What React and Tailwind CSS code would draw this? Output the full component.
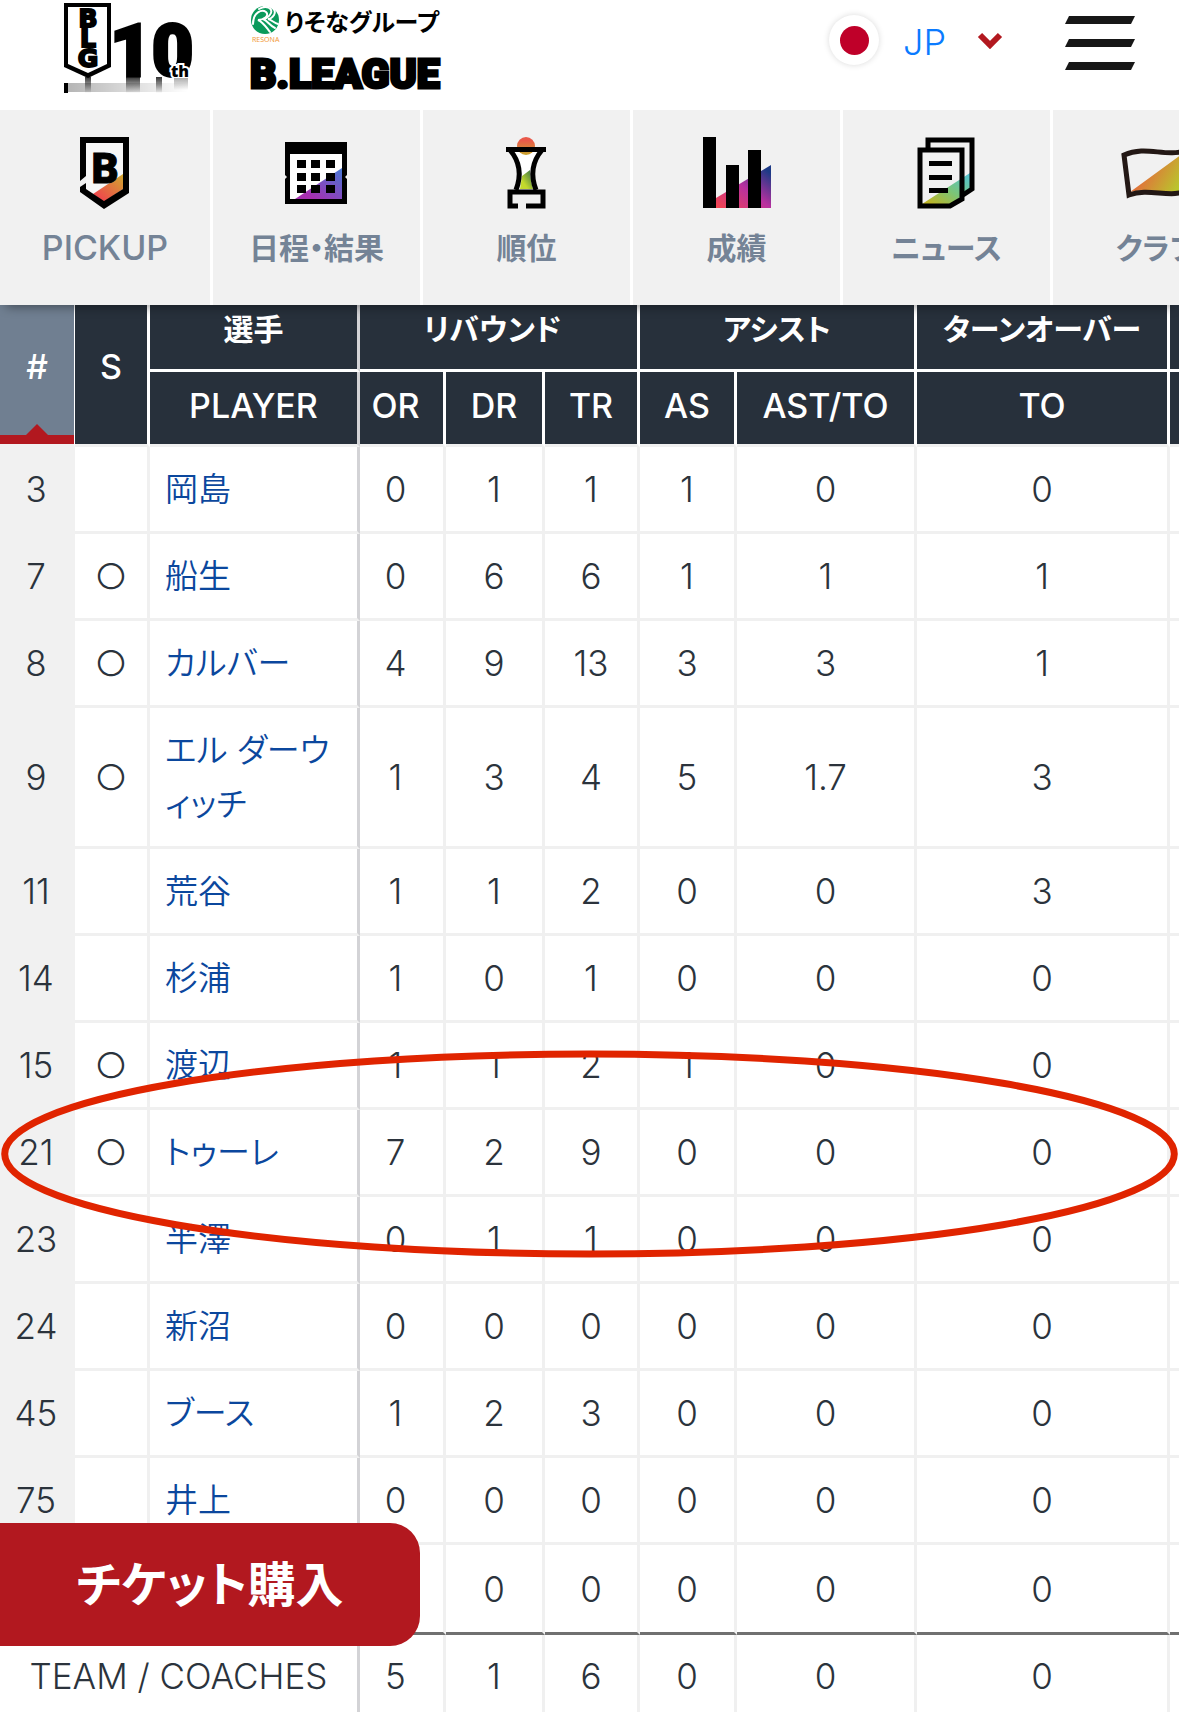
// src/App.jsx
import { useState } from "react";

const players = [
  { no: 3, starter: false, name: "岡島", stats: [0, 1, 1, 1, 0, 0] },
  { no: 7, starter: true, name: "船生", stats: [0, 6, 6, 1, 1, 1] },
  { no: 8, starter: true, name: "カルバー", stats: [4, 9, 13, 3, 3, 1] },
  { no: 9, starter: true, name: "エル ダーウィッチ", stats: [1, 3, 4, 5, 1.7, 3] },
  { no: 11, starter: false, name: "荒谷", stats: [1, 1, 2, 0, 0, 3] },
  { no: 14, starter: false, name: "杉浦", stats: [1, 0, 1, 0, 0, 0] },
  { no: 15, starter: true, name: "渡辺", stats: [1, 1, 2, 1, 0, 0] },
  { no: 21, starter: true, name: "トゥーレ", stats: [7, 2, 9, 0, 0, 0], marked: true },
  { no: 23, starter: false, name: "半澤", stats: [0, 1, 1, 0, 0, 0] },
  { no: 24, starter: false, name: "新沼", stats: [0, 0, 0, 0, 0, 0] },
  { no: 45, starter: false, name: "ブース", stats: [1, 2, 3, 0, 0, 0] },
  { no: 75, starter: false, name: "井上", stats: [0, 0, 0, 0, 0, 0] },
  { no: "", starter: false, name: "", stats: ["", 0, 0, 0, 0, 0] },
];

const teamStats = [5, 1, 6, 0, 0, 0];

const AnniversaryLogo = () => (
  <svg width="132" height="96" viewBox="0 0 132 96" aria-label="B.LEAGUE 10th">
    <defs>
      <linearGradient id="smear" x1="0" y1="0" x2="0" y2="1">
        <stop offset="0" stopColor="#000" stopOpacity="0.8" />
        <stop offset="1" stopColor="#000" stopOpacity="0" />
      </linearGradient>
      <linearGradient id="smearSide" x1="0" y1="0" x2="1" y2="0">
        <stop offset="0" stopColor="#000" stopOpacity="0.6" />
        <stop offset="1" stopColor="#000" stopOpacity="0" />
      </linearGradient>
    </defs>
    <path d="M0 3H47V67L24 78L0 67Z" />
    <path d="M4 7H43V64L24 73L4 64Z" fill="#fff" />
    <g
      fontFamily="'DejaVu Sans', sans-serif"
      fontWeight="700"
      fontSize="25"
      textAnchor="middle"
      stroke="#000"
      strokeWidth="2"
    >
      <text x="24" y="27">B</text>
      <text x="24" y="47">L</text>
      <text x="24" y="67">G</text>
    </g>
    <text
      x="46"
      y="76"
      fontFamily="Roboto, sans-serif"
      fontWeight="900"
      fontSize="72"
      stroke="#000"
      strokeWidth="3"
    >
      10
    </text>
    <text
      x="107"
      y="77"
      fontFamily="'Open Sans', sans-serif"
      fontWeight="800"
      fontSize="16"
      stroke="#fff"
      strokeWidth="4"
      paintOrder="stroke"
    >
      th
    </text>
    <rect x="21" y="77" width="6" height="16" fill="url(#smear)" />
    <rect x="62" y="77" width="14" height="16" fill="url(#smear)" />
    <rect x="92" y="77" width="6" height="16" fill="url(#smear)" />
    <rect x="110" y="78" width="14" height="12" fill="url(#smear)" opacity="0.4" />
    <rect x="0" y="83" width="124" height="9" fill="url(#smearSide)" opacity="0.5" />
    <rect x="0" y="83" width="4" height="10" />
  </svg>
);

const LeagueLogo = () => (
  <svg width="200" height="94" viewBox="0 0 200 94" aria-label="りそなグループ B.LEAGUE">
    <circle cx="15" cy="20" r="14" fill="#0a9a5b" />
    <g fill="none" stroke="#fff" strokeWidth="2" strokeLinecap="round">
      <path d="M3 24C3 12 12 9 16 12C20 16 13 20 8 20C13 22 16 27 20 32" />
      <path d="M9 9C16 5 23 8 21 13C19 18 14 19 13 19C18 21 20 26 25 28" />
      <path d="M14 6C21 5 27 10 24 15C22 18 19 19 18 19C22 20 24 23 28 24" />
    </g>
    <text x="2" y="42" fontFamily="'Noto Sans', sans-serif" fontSize="7" fill="#f29a3a">
      RESONA
    </text>
    <text
      x="35"
      y="31"
      fontFamily="'Noto Sans CJK JP', sans-serif"
      fontWeight="700"
      fontSize="24"
      className="[font-feature-settings:'palt']"
    >
      りそなグループ
    </text>
    <text
      x="0"
      y="88"
      fontFamily="Roboto, sans-serif"
      fontWeight="900"
      fontSize="41"
      stroke="#000"
      strokeWidth="3"
    >
      B.LEAGUE
    </text>
  </svg>
);

const PickupIcon = () => (
  <svg width="72" height="72" viewBox="0 0 72 72" aria-hidden="true">
    <defs>
      <linearGradient id="pickup" x1="0" y1="1" x2="1" y2="0">
        <stop offset="0.2" stopColor="#ee4b4b" />
        <stop offset="1" stopColor="#d0a92f" />
      </linearGradient>
    </defs>
    <path d="M17 6H54V52L35 64L17 53Z" fill="#f7f7f7" />
    <path d="M24 57L54 37V52L35 65Z" fill="url(#pickup)" />
    <path d="M11 0H60V56L35 72L11 55V50L17 46V52L35 64L54 52V6H17V39L11 44Z" />
    <text
      x="36"
      y="46"
      textAnchor="middle"
      fontFamily="Roboto, sans-serif"
      fontWeight="900"
      fontSize="42"
      stroke="#000"
      strokeWidth="1"
    >
      B
    </text>
  </svg>
);

const ScheduleIcon = () => (
  <svg width="72" height="72" viewBox="0 0 72 72" aria-hidden="true">
    <defs>
      <linearGradient id="schedule" x1="0" y1="1" x2="1" y2="0">
        <stop offset="0.2" stopColor="#a62fb0" />
        <stop offset="1" stopColor="#4579d6" />
      </linearGradient>
    </defs>
    <path d="M4 5H66V38L64 40L66 42V67H4V42L6 40L4 38Z" />
    <path d="M9 17H61V62H9Z" fill="#fff" />
    <path d="M14 62L61 31V62Z" fill="url(#schedule)" />
    {[23, 36, 48].map((y) =>
      [16, 30, 45].map((x) => <rect key={`${x}-${y}`} x={x} y={y} width="9" height="8" />)
    )}
  </svg>
);

const RankingIcon = () => (
  <svg width="72" height="72" viewBox="0 0 72 72" aria-hidden="true">
    <defs>
      <linearGradient id="ball" x1="0" y1="0" x2="0" y2="1">
        <stop offset="0.2" stopColor="#e9594a" />
        <stop offset="1" stopColor="#c8a52c" />
      </linearGradient>
      <linearGradient id="cup" x1="0" y1="1" x2="1" y2="0">
        <stop offset="0.3" stopColor="#c3d92c" />
        <stop offset="1" stopColor="#2c6a4c" />
      </linearGradient>
    </defs>
    <path d="M24 15H46C38 28 40 42 42 52H28C32 40 31 27 24 15Z" fill="#fff" />
    <circle cx="35" cy="9" r="9" fill="url(#ball)" />
    <path d="M31 39L39 33C39 42 41 48 42 52H29Z" fill="url(#cup)" />
    <path d="M15 10H55V15H15Z" />
    <path d="M19 13C30 26 30 40 25 53M51 13C40 26 40 40 45 53" fill="none" stroke="#000" strokeWidth="5" />
    <path d="M27 69H19V55H52V69H35" fill="none" stroke="#000" strokeWidth="5" />
  </svg>
);

const StatsIcon = () => (
  <svg width="72" height="72" viewBox="0 0 72 72" aria-hidden="true">
    <defs>
      <linearGradient id="stats" x1="0" y1="1" x2="1" y2="0">
        <stop offset="0" stopColor="#f5464d" />
        <stop offset="0.5" stopColor="#b8309f" />
        <stop offset="0.9" stopColor="#1d3a86" />
      </linearGradient>
    </defs>
    <path d="M15 61L70 28V71H15Z" fill="url(#stats)" />
    <path d="M2 0H15V71H2ZM25 28H38V71H25ZM47 13H60V71H47Z" />
  </svg>
);

const NewsIcon = () => (
  <svg width="72" height="72" viewBox="0 0 72 72" aria-hidden="true">
    <defs>
      <linearGradient id="news" x1="0" y1="1" x2="1" y2="0">
        <stop offset="0.1" stopColor="#bdb526" />
        <stop offset="0.5" stopColor="#7cc576" />
        <stop offset="1" stopColor="#4fc3d9" />
      </linearGradient>
    </defs>
    <path d="M11 67L59 36V51L41 67Z" fill="url(#news)" />
    <path d="M17 12V3H61V52L52 58" fill="none" stroke="#000" strokeWidth="5" />
    <path d="M9 13H51V62L39 69H9Z" fill="none" stroke="#000" strokeWidth="5" />
    <path d="M18 24H41V29H18ZM18 38H41V43H18ZM18 51H37V56H18Z" />
  </svg>
);

const ClubIcon = () => (
  <svg width="72" height="72" viewBox="0 0 72 72" aria-hidden="true">
    <defs>
      <linearGradient id="club" x1="0" y1="0" x2="1" y2="0.4">
        <stop offset="0.4" stopColor="#e0743a" />
        <stop offset="1" stopColor="#b9c62c" />
      </linearGradient>
    </defs>
    <path d="M9 55L65 14L69 52C49 60 33 50 9 55Z" fill="url(#club)" />
    <path
      d="M3 18C26 8 44 21 67 13L70 52C50 63 30 50 8 58Z"
      fill="none"
      stroke="#231815"
      strokeWidth="5"
    />
  </svg>
);

const navItems = [
  { label: "PICKUP", Icon: PickupIcon, text: "text-[34px] font-medium" },
  { label: "日程・結果", Icon: ScheduleIcon, text: "text-3xl font-semibold" },
  { label: "順位", Icon: RankingIcon, text: "text-3xl font-semibold" },
  { label: "成績", Icon: StatsIcon, text: "text-3xl font-semibold" },
  { label: "ニュース", Icon: NewsIcon, text: "text-3xl font-semibold" },
  { label: "クラブ", Icon: ClubIcon, text: "text-3xl font-semibold" },
];

const GroupHead = ({ children, span, className = "" }) => (
  <th
    colSpan={span}
    scope="colgroup"
    className={`h-[67px] border-r-3 border-b-3 border-white bg-[#27303b] pb-4 text-3xl leading-[46px] font-bold ${className}`}
  >
    {children}
  </th>
);

const StatHead = ({ children, className = "" }) => (
  <th
    scope="col"
    className={`h-[75px] border-r-3 border-b-3 border-r-white border-b-[#f0f0f0] bg-[#27303b] pb-1 font-medium ${className}`}
  >
    {children}
  </th>
);

const App = () => {
  const [lang, setLang] = useState("JP");

  return (
    <div className="min-h-screen overflow-hidden bg-white font-[Inter,'Noto_Sans_CJK_JP',sans-serif] text-[#2b333c] [font-feature-settings:'palt']">
      {/* Header */}
      <header className="flex h-[110px] items-start justify-between pr-11 pl-16">
        <a href="#top" className="flex gap-[54px]">
          <AnniversaryLogo />
          <LeagueLogo />
        </a>
        <div className="flex items-start">
          <div className="mt-[15px] flex items-center">
            <span className="flex size-[50px] items-center justify-center rounded-full bg-white shadow-[0_0_6px_#00000026]">
              <span className="size-[29px] rounded-full bg-[#bf0029]" />
            </span>
            <span className="relative ml-6 flex items-center">
              <select
                aria-label="Language"
                value={lang}
                onChange={(e) => setLang(e.target.value)}
                className="w-[104px] appearance-none bg-transparent pt-1 text-4xl font-light text-[#0a7bff] outline-none"
              >
                <option>JP</option>
                <option>EN</option>
              </select>
              <svg
                width="26"
                height="18"
                viewBox="0 0 26 18"
                className="pointer-events-none absolute right-1"
                aria-hidden="true"
              >
                <path d="M3 4L13 14L23 4" fill="none" stroke="#b2181f" strokeWidth="6" />
              </svg>
            </span>
          </div>
          <button type="button" aria-label="Menu" className="mt-4 ml-[58px]">
            <svg width="70" height="55" viewBox="0 0 70 55" fill="#171717">
              <path d="M4 0H70L66 8H0ZM4 23H70L66 31H0ZM4 46H70L66 54H0Z" />
            </svg>
          </button>
        </div>
      </header>

      {/* Nav */}
      <nav className="relative z-20 flex overflow-hidden bg-[#f1f1f1] shadow-[0_8px_10px_-6px_#00000066]">
        {navItems.map(({ label, Icon, text }) => (
          <a
            key={label}
            href="#nav"
            className="flex w-[210px] shrink-0 flex-col items-center border-l-3 border-white pt-[27px] pb-[34px] first:border-l-0"
          >
            <Icon />
            <span className={`mt-4 leading-[46px] whitespace-nowrap text-[#748396] ${text}`}>
              {label}
            </span>
          </a>
        ))}
      </nav>

      {/* Box score */}
      <div className="overflow-hidden">
        <table className="w-[1270px] table-fixed border-separate border-spacing-0 text-center text-[35px] leading-[54px] font-light">
          <colgroup>
            <col className="w-[75px]" />
            <col className="w-[75px]" />
            <col className="w-[210px]" />
            <col className="w-[86px]" />
            <col className="w-[99px]" />
            <col className="w-[95px]" />
            <col className="w-[97px]" />
            <col className="w-[180px]" />
            <col className="w-[253px]" />
            <col className="w-[100px]" />
          </colgroup>
          <thead className="text-[34px] text-white">
            <tr>
              <th
                rowSpan={2}
                scope="col"
                className="relative border-r border-b-3 border-r-white border-b-[#f1f1f1] bg-[#707f91] pb-4 font-medium"
              >
                #
                <span className="absolute inset-x-0 bottom-0 h-[9px] bg-[#b2181f]" />
                <span className="absolute bottom-[9px] left-1/2 -ml-[11px] border-x-11 border-b-11 border-x-transparent border-b-[#b2181f]" />
              </th>
              <th
                rowSpan={2}
                scope="col"
                className="border-r-3 border-b-3 border-r-white border-b-[#f0f0f0] bg-[#27303b] pb-4 font-medium"
              >
                S
              </th>
              <th className="border-r-3 border-b-3 border-r-[#d3d3d6] border-b-white bg-[#27303b] pb-4 text-3xl leading-[46px] font-bold">
                選手
              </th>
              <GroupHead span={3} className="pr-3">
                リバウンド
              </GroupHead>
              <GroupHead span={2}>アシスト</GroupHead>
              <GroupHead span={1}>ターンオーバー</GroupHead>
              <GroupHead span={1} />
            </tr>
            <tr>
              <th
                scope="col"
                className="border-r-3 border-b-3 border-r-[#d3d3d6] border-b-[#f0f0f0] bg-[#27303b] pb-1 font-medium"
              >
                PLAYER
              </th>
              <StatHead className="pr-3">OR</StatHead>
              <StatHead>DR</StatHead>
              <StatHead>TR</StatHead>
              <StatHead>AS</StatHead>
              <StatHead>AST/TO</StatHead>
              <StatHead>TO</StatHead>
              <StatHead />
            </tr>
          </thead>
          <tbody>
            {players.map((player) => (
              <tr key={player.no} className="group">
                <td
                  className={`relative border-r-3 border-b-3 border-[#f1f1f1] bg-[#f1f1f1] ${player.marked ? "z-10" : ""}`}
                >
                  {player.no}
                  {player.marked && (
                    <svg
                      className="pointer-events-none absolute -top-[62px] left-0 h-[212px] w-screen"
                      aria-hidden="true"
                    >
                      <ellipse cx="50%" cy="106" rx="49.6%" ry="100" fill="none" stroke="#e02400" strokeWidth="7" />
                    </svg>
                  )}
                </td>
                <td className="border-r-3 border-b-3 border-[#f0f0f0] group-last:border-b-[#707070]">
                  {player.starter && "○"}
                </td>
                <td className="border-r-3 border-b-3 border-r-[#d3d3d6] border-b-[#f0f0f0] py-[15px] pr-2 pl-[15px] text-left text-[33px] font-[350] group-last:border-b-[#707070]">
                  <a href="#player" className="text-[#0b479d]">
                    {player.name}
                  </a>
                </td>
                {player.stats.map((value, i) => (
                  <td
                    key={i}
                    className="h-[87px] border-r-3 border-b-3 border-[#f0f0f0] group-last:h-[90px] group-last:border-b-[#707070] nth-4:pr-3"
                  >
                    {value}
                  </td>
                ))}
                <td className="border-b-3 border-[#f0f0f0] group-last:border-b-[#707070]" />
              </tr>
            ))}
          </tbody>
          <tfoot>
            <tr>
              <td colSpan={3} className="h-[77px] border-r-3 border-[#d3d3d6] pt-1">
                TEAM / COACHES
              </td>
              {teamStats.map((value, i) => (
                <td key={i} className="border-r-3 border-[#f0f0f0] pt-1 nth-2:pr-3">
                  {value}
                </td>
              ))}
              <td />
            </tr>
          </tfoot>
        </table>
      </div>

      {/* Ticket button */}
      <button
        type="button"
        className="fixed bottom-[66px] left-0 z-20 h-[123px] w-[420px] rounded-r-[30px] bg-[#b2181f] text-5xl font-bold text-white"
      >
        チケット購入
      </button>
    </div>
  );
};

export default App;
